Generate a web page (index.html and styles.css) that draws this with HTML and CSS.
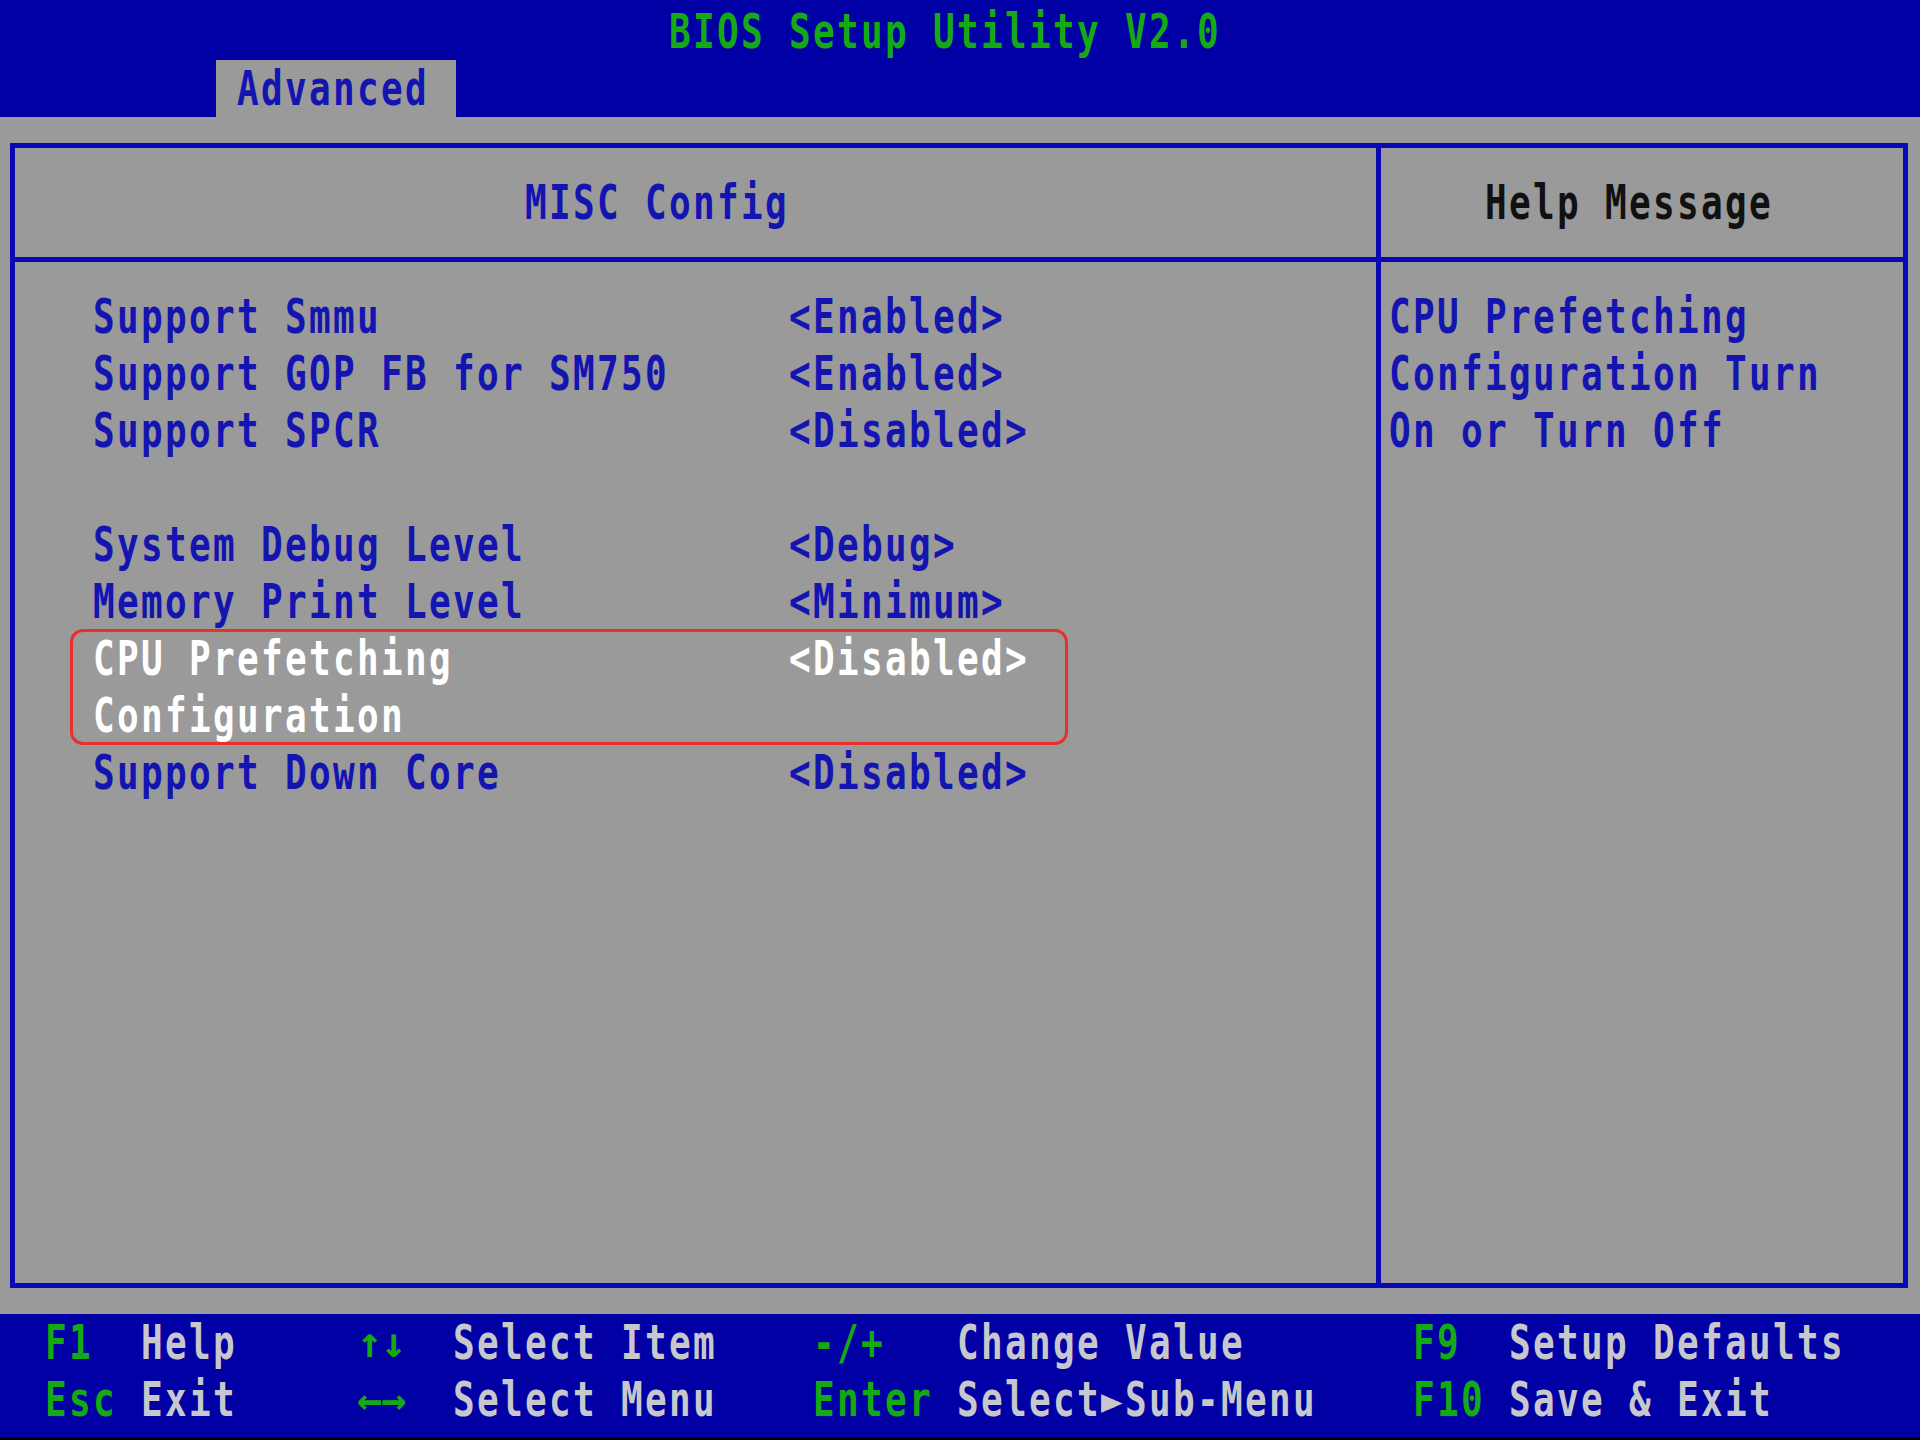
FILE: index.html
```html
<!DOCTYPE html>
<html lang="en">
<head>
<meta charset="UTF-8" />
<meta name="viewport" content="width=device-width, initial-scale=1" />
<title>BIOS Setup Utility V2.0</title>
<link rel="stylesheet" href="styles.css">
</head>
<body>
  <div class="screen">
    <header class="top">
      <div class="title">BIOS Setup Utility V2.0</div>
      <nav class="tabs">
        <div class="tab"><span>Advanced</span></div>
      </nav>
    </header>

    <main class="workspace">
      <div class="frame">
        <section class="panel settings">
          <div class="panel-head"><h2 class="panel-title">MISC Config</h2></div>
          <ul class="items">
            <li class="item"><div class="label"><span>Support Smmu</span></div><div class="value"><span>&lt;Enabled&gt;</span></div></li>
            <li class="item"><div class="label"><span>Support GOP FB for SM750</span></div><div class="value"><span>&lt;Enabled&gt;</span></div></li>
            <li class="item"><div class="label"><span>Support SPCR</span></div><div class="value"><span>&lt;Disabled&gt;</span></div></li>
            <li class="item gap"></li>
            <li class="item"><div class="label"><span>System Debug Level</span></div><div class="value"><span>&lt;Debug&gt;</span></div></li>
            <li class="item"><div class="label"><span>Memory Print Level</span></div><div class="value"><span>&lt;Minimum&gt;</span></div></li>
            <li class="item selected"><div class="label"><span>CPU Prefetching</span><span>Configuration</span></div><div class="value"><span>&lt;Disabled&gt;</span></div></li>
            <li class="item"><div class="label"><span>Support Down Core</span></div><div class="value"><span>&lt;Disabled&gt;</span></div></li>
          </ul>
        </section>
        <section class="panel help">
          <div class="panel-head"><h2 class="panel-title">Help Message</h2></div>
          <div class="help-text">
            <p>CPU Prefetching</p>
            <p>Configuration Turn</p>
            <p>On or Turn Off</p>
          </div>
        </section>
      </div>
    </main>

    <footer class="keys">
      <span class="key">F1</span><span class="desc">Help</span>
      <span class="key arrows">↑↓</span><span class="desc">Select Item</span>
      <span class="key">-/+</span><span class="desc">Change Value</span>
      <span class="key">F9</span><span class="desc">Setup Defaults</span>
      <span class="key">Esc</span><span class="desc">Exit</span>
      <span class="key arrows">←→</span><span class="desc">Select Menu</span>
      <span class="key">Enter</span><span class="desc">Select►Sub-Menu</span>
      <span class="key">F10</span><span class="desc">Save &amp; Exit</span>
    </footer>
  </div>
</body>
</html>
```

FILE: styles.css
```css
:root {
  --bios-blue: #0000a4;
  --line-blue: #0808b4;
  --text-blue: #1414b0;
  --bios-gray: #9a9a9a;
  --bios-green: #14aa14;
  --key-text: #c8c8cc;
  --mark-red: #e8302c;
  --cell: 57px;
}
* {
  box-sizing: border-box;
}
body {
  margin: 0;
  background: #000;
  font-family: 'DejaVu Sans Mono', 'Liberation Mono', monospace;
  font-size: 36px;
  font-weight: bold;
  /* 80 columns of 24px, like the 640x480 text mode scaled 3x */
  letter-spacing: 2.33px;
  line-height: var(--cell);
  color: var(--text-blue);
}
h2, p, ul {
  margin: 0;
  padding: 0;
  font-size: inherit;
  font-weight: inherit;
}
ul {
  list-style: none;
}

/* the bitmap font is tall and narrow */
.title,
.tab span,
.panel-title,
.item span,
.help-text p,
.keys span {
  display: block;
  white-space: pre;
  transform: scaleY(1.33);
}

.screen {
  width: 1920px;
  height: 1440px;
  display: flex;
  flex-direction: column;
}

.top {
  height: 117px;
  flex: none;
  background: var(--bios-blue);
  padding-top: 3px;
}
.title {
  height: var(--cell);
  padding-left: 669px;
  color: var(--bios-green);
}
.tabs {
  display: flex;
  padding-left: 216px;
}
.tab {
  width: 240px;
  height: var(--cell);
  padding-left: 21px;
  background: var(--bios-gray);
  color: var(--text-blue);
}

.workspace {
  height: 1197px;
  flex: none;
  background: var(--bios-gray);
  padding: 26px 12px 0 10px;
}
.frame {
  height: 1145px;
  display: flex;
  border: 5px solid var(--line-blue);
}
.panel {
  display: flex;
  flex-direction: column;
}
.settings {
  flex: 0 0 1366px;
  border-right: 5px solid var(--line-blue);
}
.help {
  flex: 1;
}
.panel-head {
  height: 114px;
  display: flex;
  align-items: center;
  border-bottom: 5px solid var(--line-blue);
}
.settings .panel-title {
  padding-left: 510px;
}
.help .panel-title {
  padding-left: 104px;
  color: #111;
}

.items {
  padding-top: 26px;
}
.item {
  display: grid;
  grid-template-columns: 696px 1fr;
  align-items: start;
  width: 996px;
  min-height: var(--cell);
  margin-left: 56px;
  padding-left: 22px;
}
.item.selected {
  color: #fff;
  border-radius: 12px;
  outline: 3px solid var(--mark-red);
  outline-offset: -2px;
}

.help-text {
  padding: 26px 0 0 8px;
}

.keys {
  flex: 1;
  background: var(--bios-blue);
  border-bottom: 3px solid #000;
  padding-left: 45px;
  display: grid;
  grid-template-columns: 96px 216px 96px 360px 144px 456px 96px 1fr;
  grid-auto-rows: var(--cell);
}
.key {
  color: var(--bios-green);
}
.keys .arrows {
  font-size: 42px;
  letter-spacing: -1.3px;
  transform: none;
}
.desc {
  color: var(--key-text);
}
```
